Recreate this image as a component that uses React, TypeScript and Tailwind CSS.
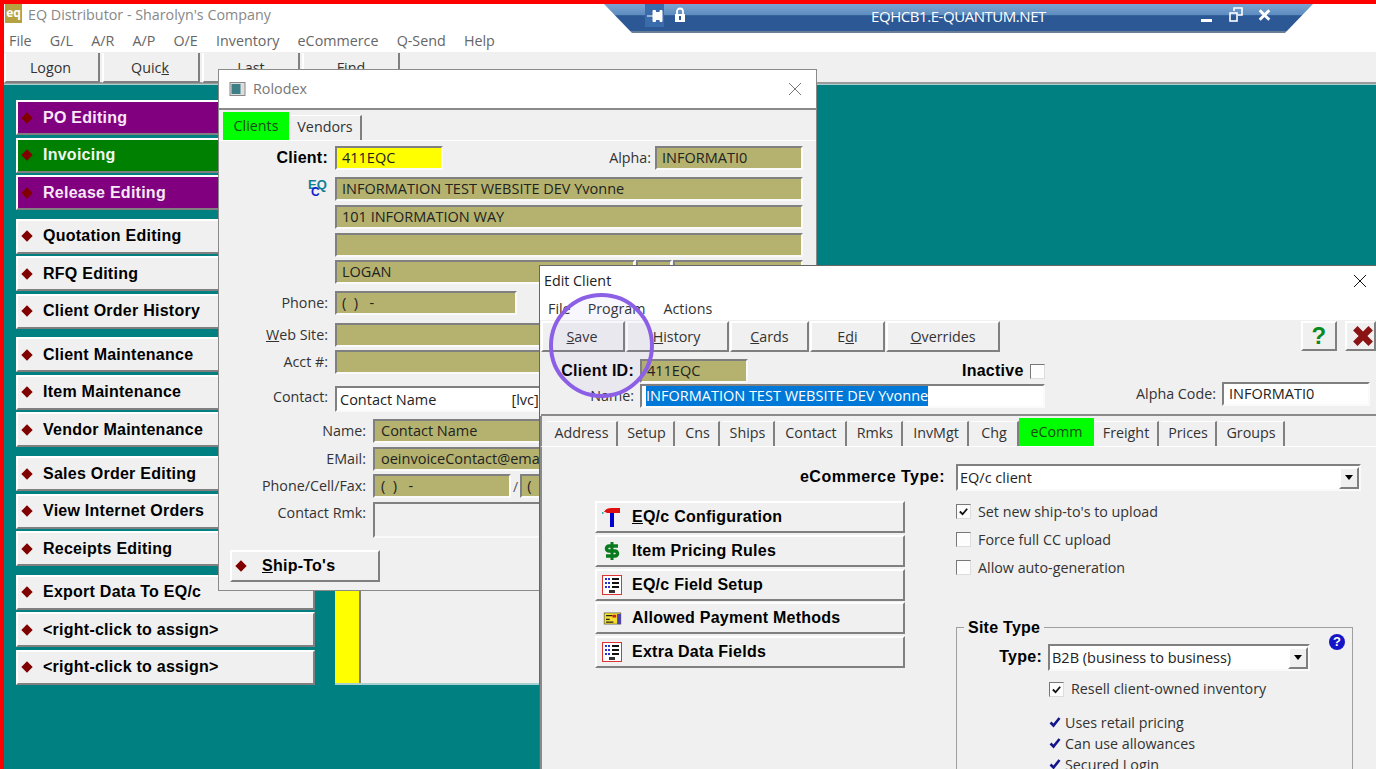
import type { ReactNode } from "react";

const sans = "font-['Open_Sans',sans-serif]";
const bold = "font-['Liberation_Sans',sans-serif] font-bold tracking-[0.25px]";
const raised = "border-2 border-t-white border-l-white border-b-[#808080] border-r-[#808080]";
const sunken = "border-2 border-t-[#808080] border-l-[#808080] border-b-[#fafafa] border-r-[#fafafa]";
const olive = "bg-[#b4b26e]";

const sideGroups = [
  [
    { label: "PO Editing", tone: "bg-[#800080] text-[#f8e8f8]" },
    { label: "Invoicing", tone: "bg-[#008000] text-[#f0f8f0]" },
    { label: "Release Editing", tone: "bg-[#800080] text-[#f8e8f8]" },
  ],
  [{ label: "Quotation Editing" }, { label: "RFQ Editing" }, { label: "Client Order History" }],
  [{ label: "Client Maintenance" }, { label: "Item Maintenance" }, { label: "Vendor Maintenance" }],
  [{ label: "Sales Order Editing" }, { label: "View Internet Orders" }, { label: "Receipts Editing" }],
  [{ label: "Export Data To EQ/c" }, { label: "<right-click to assign>" }, { label: "<right-click to assign>" }],
];

function Diamond() {
  return <span className="w-[8px] h-[8px] rotate-45 bg-[#800000] shrink-0 inline-block" />;
}

function SideButton({ label, tone }: { label: string; tone?: string }) {
  return (
    <div className={`h-[35px] w-[299px] flex items-center gap-[12px] pl-[5px] text-[16px] ${bold} ${raised} ${tone ?? "bg-[#f0f0f0] text-black"}`}>
      <Diamond />
      <span>{label}</span>
    </div>
  );
}

function Field({ className = "", tone = olive, children }: { className?: string; tone?: string; children?: ReactNode }) {
  return (
    <div className={`h-[24px] flex items-center pl-[5px] text-[14.5px] text-[#222] whitespace-pre overflow-hidden ${sans} ${sunken} ${tone} ${className}`}>
      {children}
    </div>
  );
}

function Row({ label, labelW = 116, className = "", children }: { label?: ReactNode; labelW?: number; className?: string; children: ReactNode }) {
  return (
    <div className={`flex items-center ${className}`}>
      <div className={`shrink-0 text-right text-[14.3px] text-[#333] pr-[7px] ${sans}`} style={{ width: labelW }}>
        {label}
      </div>
      {children}
    </div>
  );
}

function Check({ on }: { on?: boolean }) {
  return (
    <span className="w-[15px] h-[15px] shrink-0 flex items-center justify-center bg-[#fdfdfd] border border-t-[#777] border-l-[#777] border-b-[#ddd] border-r-[#ddd]">
      {on && (
        <svg viewBox="0 0 12 12" className="w-[11px] h-[11px]">
          <path d="M2 6l3 3 5-6" fill="none" stroke="#111" strokeWidth="2" />
        </svg>
      )}
    </span>
  );
}

function CheckRow({ label, on, className = "" }: { label: string; on?: boolean; className?: string }) {
  return (
    <div className={`flex items-center gap-[7px] text-[14.3px] text-[#333] ${sans} ${className}`}>
      <Check on={on} />
      <span>{label}</span>
    </div>
  );
}

function DropArrow() {
  return (
    <span className={`w-[20px] h-[22px] flex items-center justify-center bg-[#f0f0f0] shrink-0 ${raised}`}>
      <span className="w-0 h-0 border-x-[4px] border-x-transparent border-t-[5px] border-t-black" />
    </span>
  );
}

function Tab({ children, active, className = "" }: { children: ReactNode; active?: boolean; className?: string }) {
  return (
    <div
      className={`flex items-center justify-center text-[14.3px] ${sans} ${
        active
          ? "bg-[#00ff00] text-[#1a4a1a] h-[28px] pb-[1px]"
          : "bg-[#f0f0f0] text-[#333] h-[25px] pb-[3px] border-t border-t-white border-r-2 border-r-[#808080]"
      } ${className}`}
    >
      {children}
    </div>
  );
}

function ToolButton({ children, className = "" }: { children: ReactNode; className?: string }) {
  return (
    <div className={`h-[31px] flex items-center justify-center pt-[2px] text-[14.3px] text-[#333] bg-[#f0f0f0] ${sans} ${raised} ${className}`}>
      {children}
    </div>
  );
}

function GridIcon() {
  return (
    <svg viewBox="0 0 20 20" className="w-[20px] h-[20px]">
      <rect x="0.5" y="0.5" width="19" height="19" fill="#fff" stroke="#d33" />
      <path d="M3 4h5M3 8h5M3 12h5" stroke="#2233cc" strokeWidth="2" strokeDasharray="2 1" />
      <path d="M10 4h7M10 8h7M10 12h7" stroke="#111" strokeWidth="2" />
      <rect x="7" y="15" width="6" height="3" fill="#333" />
    </svg>
  );
}

function HammerIcon() {
  return (
    <svg viewBox="0 0 20 20" className="w-[20px] h-[20px]">
      <path d="M8 6h4v14H8z" fill="#0000d0" />
      <path d="M2 5q2-4 7-4h9v5H5q-1-1-3-1z" fill="#e01010" />
      <rect x="0" y="5" width="1.5" height="2" fill="#30b0b0" />
    </svg>
  );
}

function DollarIcon() {
  return (
    <svg viewBox="0 0 20 20" className="w-[20px] h-[20px]">
      <path d="M16 5H7a2 2 0 0 0 0 5h6a2 2 0 0 1 0 5H4" fill="none" stroke="#0a7a1e" strokeWidth="3.5" />
      <path d="M10 1v18" stroke="#0a7a1e" strokeWidth="3" />
    </svg>
  );
}

function CardIcon() {
  return (
    <svg viewBox="0 0 20 14" className="w-[19px] h-[13px]">
      <rect x="1" y="1" width="18" height="12" fill="#f5df2e" stroke="#333" strokeWidth="0.6" />
      <rect x="15" y="2" width="4" height="11" fill="#4a3fb0" />
      <path d="M3 4h7M3 8h4M3 11h8" stroke="#222" strokeWidth="1.4" />
      <rect x="10" y="3" width="4" height="3" fill="#c22" />
    </svg>
  );
}

function ActionButton({ icon, children }: { icon: ReactNode; children: ReactNode }) {
  return (
    <div className={`h-[32px] w-[310px] flex items-center bg-[#f0f0f0] text-[16px] text-black ${bold} ${raised}`}>
      <span className="w-[30px] flex justify-center shrink-0">{icon}</span>
      <span className="ml-[5px]">{children}</span>
    </div>
  );
}

function Rolodex() {
  return (
    <div className="absolute left-[218px] top-[69px] w-[599px] h-[522px] bg-[#f0f0f0] border border-[#8a8a8a] flex flex-col">
      <div className={`h-[38px] bg-white flex items-center pl-[10px] text-[14.3px] text-[#777] ${sans}`}>
        <svg viewBox="0 0 16 14" className="w-[17px] h-[14px] mr-[7px]">
          <rect x="0.5" y="0.5" width="15" height="13" fill="#ddd" stroke="#888" />
          <rect x="2" y="2" width="9" height="10" fill="#3d7f86" />
        </svg>
        Rolodex
        <svg viewBox="0 0 14 14" className="w-[14px] h-[14px] ml-auto mr-[14px]">
          <path d="M1 1l12 12M13 1L1 13" stroke="#777" strokeWidth="1" />
        </svg>
      </div>
      <div className="h-[2px] bg-[#8a8a8a]" />
      <div className="flex items-end pl-[4px] pt-[2px] h-[31px] border-b border-b-white">
        <Tab active className="w-[66px]">Clients</Tab>
        <Tab className="w-[72px] ml-[1px]">Vendors</Tab>
      </div>
      <div className="flex flex-col pr-[13px] pt-[5px]">
        <div className="flex items-center">
          <div className={`w-[116px] text-right pr-[7px] text-[16px] text-black ${bold}`}>Client:</div>
          <Field tone="bg-[#ffff00]" className="w-[108px]">411EQC</Field>
          <div className={`ml-auto pr-[4px] text-[14.3px] text-[#333] ${sans}`}>Alpha:</div>
          <Field className="w-[148px]">INFORMATI0</Field>
        </div>
        <Row
          className="mt-[7px] h-[24px]"
          label={
            <span className={`relative block ml-auto w-[20px] h-[24px] text-left text-[13px] leading-[16px] text-[#0f7f96] tracking-normal ${bold}`}>
              EQ
              <span className="absolute left-[3px] top-[7px] text-[#1020d0] text-[12px]">C</span>
            </span>
          }
        >
          <Field className="flex-1">INFORMATION TEST WEBSITE DEV Yvonne</Field>
        </Row>
        <Row className="mt-[4px]"><Field className="flex-1">101 INFORMATION WAY</Field></Row>
        <Row className="mt-[4px]"><Field className="flex-1" /></Row>
        <Row className="mt-[3px]">
          <Field className="w-[300px]">LOGAN</Field>
          <Field className="w-[36px] ml-[1px]" />
          <Field className="flex-1 ml-[1px]" />
        </Row>
        <Row className="mt-[7px]" label="Phone:"><Field className="w-[182px]">(  )   -</Field></Row>
        <Row className="mt-[8px]" label={<span><u>W</u>eb Site:</span>}><Field className="flex-1" /></Row>
        <Row className="mt-[3px]" label="Acct #:"><Field className="flex-1" /></Row>
        <Row className="mt-[12px]" label={<span className="block pb-[4px]">Contact:</span>}>
          <Field tone="bg-white" className="flex-1 !h-[26px] !pl-[3px] pt-[2px]">
            <span>Contact Name</span>
            <span className="ml-[75px]">[lvc]</span>
          </Field>
        </Row>
        <Row className="mt-[7px]" labelW={154} label="Name:"><Field className="flex-1 pl-[6px]">Contact Name</Field></Row>
        <Row className="mt-[4px]" labelW={154} label="EMail:"><Field className="flex-1 pl-[6px]">oeinvoiceContact@email.com</Field></Row>
        <Row className="mt-[3px]" labelW={154} label="Phone/Cell/Fax:">
          <Field className="w-[138px] pl-[6px]">(  )   -</Field>
          <span className={`mx-[2px] text-[14px] text-[#555] ${sans}`}>/</span>
          <Field className="flex-1">(  )   -</Field>
        </Row>
        <Row className="mt-[4px] items-start" labelW={154} label="Contact Rmk:">
          <Field tone="bg-[#f0f0f0]" className="flex-1 !h-[36px]" />
        </Row>
        <div className={`mt-[12px] ml-[11px] w-[150px] h-[32px] flex items-center gap-[17px] pl-[5px] bg-[#f0f0f0] text-[16px] text-black ${bold} ${raised}`}>
          <Diamond />
          <span><u>S</u>hip-To's</span>
        </div>
      </div>
    </div>
  );
}

function EditClient() {
  return (
    <div className="absolute left-[539px] top-[265px] w-[837px] h-[504px] bg-[#f0f0f0] border-l border-t border-[#666] flex flex-col">
      <div className={`h-[29px] bg-white flex items-center pl-[4px] text-[14.3px] text-[#222] ${sans}`}>
        Edit Client
        <svg viewBox="0 0 14 14" className="w-[14px] h-[14px] ml-auto mr-[9px]">
          <path d="M1 1l12 12M13 1L1 13" stroke="#111" strokeWidth="1" />
        </svg>
      </div>
      <div className={`h-[25px] bg-white flex items-center pl-[8px] pt-[2px] text-[14.3px] text-[#333] ${sans}`}>
        <span>File</span>
        <span className="ml-[17px]">Program</span>
        <span className="ml-[18px]">Actions</span>
      </div>
      <div className="h-[32px] flex items-center pl-[1px]">
        <ToolButton className="w-[84px] mr-[1px] pr-[2px]"><u>S</u>ave</ToolButton>
        <ToolButton className="w-[103px] mr-[1px] pr-[2px]"><u>H</u>istory</ToolButton>
        <ToolButton className="w-[79px] mr-[1px]"><u>C</u>ards</ToolButton>
        <ToolButton className="w-[75px] mr-[1px]">E<u>d</u>i</ToolButton>
        <ToolButton className="w-[114px]"><u>O</u>verrides</ToolButton>
        <ToolButton className="w-[36px] ml-auto mr-[8px] !h-[30px] !pt-0">
          <span className={`text-[24px] text-[#0a8a1e] ${bold}`}>?</span>
        </ToolButton>
        <ToolButton className="w-[31px] !h-[30px] overflow-hidden !justify-start pl-[5px] !pt-0">
          <svg viewBox="0 0 20 20" className="w-[22px] h-[22px] shrink-0">
            <path d="M1 5l4-4 5 5 5-5 4 4-5 5 5 5-4 4-5-5-5 5-4-4 5-5z" fill="#8a1414" />
          </svg>
        </ToolButton>
      </div>
      <div className="h-[62px] pt-[7px]">
        <div className="flex items-center h-[24px]">
          <div className={`w-[100px] text-right pr-[6px] text-[16px] text-black ${bold}`}>Client ID:</div>
          <Field className="w-[108px]">411EQC</Field>
          <div className={`ml-[214px] text-[16px] text-black ${bold}`}>Inactive</div>
          <span className="ml-[6px]"><Check /></span>
        </div>
        <div className="flex items-center h-[24px] mt-[1px]">
          <div className={`w-[100px] text-right pr-[6px] text-[14.3px] text-[#333] ${sans}`}>Name:</div>
          <Field tone="bg-white" className="w-[405px] !pl-[4px]">
            <span className="bg-[#0078d7] text-white">INFORMATION TEST WEBSITE DEV Yvonne</span>
          </Field>
          <div className={`w-[177px] text-right pr-[6px] pb-[4px] text-[14.3px] text-[#333] ${sans}`}>Alpha Code:</div>
          <Field tone="bg-white" className="w-[148px] mt-[-5px]">INFORMATI0</Field>
        </div>
      </div>
      <div className="h-[2px] bg-[#8a8a8a] ml-[1px]" />
      <div className="flex items-end pl-[5px] h-[31px] border-b border-b-white border-l-2 border-l-[#8a8a8a]">
        <Tab className="w-[71px] mr-[2px]">Address</Tab>
        <Tab className="w-[55px] mr-[2px]">Setup</Tab>
        <Tab className="w-[43px] mr-[2px]">Cns</Tab>
        <Tab className="w-[53px] mr-[2px]">Ships</Tab>
        <Tab className="w-[70px] mr-[2px]">Contact</Tab>
        <Tab className="w-[54px] mr-[2px]">Rmks</Tab>
        <Tab className="w-[64px] mr-[2px]">InvMgt</Tab>
        <Tab className="w-[48px]">Chg</Tab>
        <Tab active className="w-[75px] mr-[1px]">eComm</Tab>
        <Tab className="w-[64px] mr-[2px]">Freight</Tab>
        <Tab className="w-[56px] mr-[2px]">Prices</Tab>
        <Tab className="w-[66px]">Groups</Tab>
      </div>
      <div className="flex-1 flex border-l-2 border-l-[#8a8a8a] overflow-hidden">
        <div className="w-[362px] shrink-0 pl-[53px] pt-[54px] flex flex-col gap-[1.75px]">
          <ActionButton icon={<HammerIcon />}><u>E</u>Q/c Configuration</ActionButton>
          <ActionButton icon={<DollarIcon />}>Item Pricing Rules</ActionButton>
          <ActionButton icon={<GridIcon />}>EQ/c Field Setup</ActionButton>
          <ActionButton icon={<CardIcon />}>Allowed Payment Methods</ActionButton>
          <ActionButton icon={<GridIcon />}>Extra Data Fields</ActionButton>
        </div>
        <div className="flex-1 flex flex-col pt-[17px]">
          <div className="flex items-center ml-[-108px]">
            <div className={`w-[160px] text-right text-[16px] text-black pr-[11px] pb-[2px] ${bold} !tracking-[0.5px]`}>eCommerce Type:</div>
            <Field tone="bg-white" className="w-[405px] !h-[27px] !pl-[2px] !pr-0">
              <span>EQ/c client</span>
              <span className="ml-auto"><DropArrow /></span>
            </Field>
          </div>
          <CheckRow on label="Set new ship-to's to upload" className="mt-[10px] ml-[52px]" />
          <CheckRow label="Force full CC upload" className="mt-[6.5px] ml-[52px]" />
          <CheckRow label="Allow auto-generation" className="mt-[6.5px] ml-[52px]" />
          <div className="mt-[49px] ml-[52px] w-[397px] flex-1 border border-[#a0a0a0] border-b-0 relative pt-[16px]">
            <span className={`absolute left-[7px] top-[-12px] px-[4px] bg-[#f0f0f0] text-[16px] text-black ${bold}`}>Site Type</span>
            <span className="absolute left-[372px] top-[6px] w-[16px] h-[16px] rounded-full bg-[#1515c8] text-white text-[13px] leading-[16px] text-center font-bold font-['Liberation_Sans',sans-serif]">?</span>
            <div className="flex items-center">
              <div className={`w-[91px] text-right pr-[6px] pb-[1px] text-[16px] text-black ${bold}`}>Type:</div>
              <Field tone="bg-white" className="w-[262px] !h-[27px] !pl-[2px] !pr-0">
                <span>B2B (business to business)</span>
                <span className="ml-auto"><DropArrow /></span>
              </Field>
            </div>
            <CheckRow on label="Resell client-owned inventory" className="mt-[7px] ml-[92px]" />
            <div className={`mt-[12px] ml-[92px] flex flex-col text-[14.3px] leading-[21px] text-[#333] ${sans}`}>
              {["Uses retail pricing", "Can use allowances", "Secured Login"].map((t) => (
                <div key={t} className="flex items-center gap-[4px]">
                  <svg viewBox="0 0 12 12" className="w-[12px] h-[12px]">
                    <path d="M1.5 6.5l3 3 6-7.5" fill="none" stroke="#14148c" strokeWidth="2.6" />
                  </svg>
                  <span>{t}</span>
                </div>
              ))}
            </div>
          </div>
        </div>
      </div>
    </div>
  );
}

function ConnectionBar() {
  return (
    <div className={`absolute left-[604px] top-[4px] w-[709px] h-[29px] flex items-center text-white text-[15px] [clip-path:polygon(0_0,100%_0,calc(100%-28px)_100%,28px_100%)] bg-[linear-gradient(#7ba3d0_0%,#5d8cc0_38%,#2c5896_40%,#2c5896_92%,#6a7f96_95%)] ${sans}`}>
      <span className="absolute left-[41px] top-[0px] w-[19px] h-[23px] bg-[#3a6cab] flex items-center justify-center">
        <svg viewBox="0 0 16 14" className="w-[16px] h-[14px]">
          <path d="M0 7h6M6 1.5h2.5v11H6zM8.5 3.5h5v7h-5M13 1.5h2v11h-2z" fill="#fff" stroke="#fff" strokeWidth="1" />
        </svg>
      </span>
      <svg viewBox="0 0 12 16" className="absolute left-[69px] top-[3px] w-[14px] h-[16px]">
        <path d="M3 7V4.5a3 3 0 0 1 6 0V7" fill="none" stroke="#fff" strokeWidth="1.8" />
        <path d="M1 7h10v8H1z" fill="#fff" />
        <rect x="5" y="9" width="2" height="4" fill="#2c5896" />
      </svg>
      <span className="w-full text-center pb-[5px] tracking-[-0.45px]">EQHCB1.E-QUANTUM.NET</span>
      <span className="absolute left-[597px] top-[15px] w-[11px] h-[3px] bg-white" />
      <svg viewBox="0 0 14 15" className="absolute left-[625px] top-[3px] w-[14px] h-[15px]">
        <path d="M5 4V1h8v7H9" fill="none" stroke="#fff" strokeWidth="1.6" />
        <rect x="1" y="6" width="7" height="8" fill="none" stroke="#fff" strokeWidth="1.6" />
      </svg>
      <svg viewBox="0 0 10 10" className="absolute left-[654px] top-[5px] w-[13px] h-[12px]">
        <path d="M1 1l8 8M9 1l-8 8" stroke="#fff" strokeWidth="2.4" />
      </svg>
    </div>
  );
}

export default function App() {
  return (
    <div className="relative w-[1376px] h-[769px] overflow-hidden bg-[#ff0000] pl-[4px] pt-[4px] flex flex-col">
      <div className={`h-[24px] bg-white flex items-start text-[14.3px] leading-[22px] text-[#888] ${sans}`}>
        <span className="w-[17px] h-[19px] mr-[6px] ml-[1px] bg-[#b5a13f] text-white text-[12px] leading-[18px] text-center font-bold">eq</span>
        EQ Distributor - Sharolyn's Company
      </div>
      <div className={`h-[24px] bg-white flex items-center gap-[18.2px] pl-[5px] pt-[2px] text-[14.3px] text-[#666] ${sans}`}>
        <span>File</span>
        <span>G/L</span>
        <span>A/R</span>
        <span>A/P</span>
        <span>O/E</span>
        <span>Inventory</span>
        <span>eCommerce</span>
        <span>Q-Send</span>
        <span>Help</span>
      </div>
      <div className="h-[32px] bg-[#f0f0f0] flex items-start pt-[1px] border-b-2 border-b-[#9a9a9a]">
        <ToolButton className="w-[96px] !h-[30px] border-t-0 pr-[3px]">Logon</ToolButton>
        <ToolButton className="w-[98px] !h-[30px] border-t-0 ml-[2px] pr-[2px]">
          <span>Quic<u>k</u></span>
        </ToolButton>
        <ToolButton className="w-[98px] !h-[30px] border-t-0 ml-[2px]">Last</ToolButton>
        <ToolButton className="w-[98px] !h-[30px] border-t-0 ml-[2px]">Find</ToolButton>
      </div>
      <div className="flex-1 bg-[#008080] border-t border-t-[#a8d0d0] flex items-start">
        <div className="ml-[12px] mt-[15px] flex flex-col gap-[8.7px]">
          {sideGroups.map((group, i) => (
            <div key={i} className="flex flex-col gap-[2.5px]">
              {group.map((b, j) => (
                <SideButton key={j} label={b.label} tone={"tone" in b ? b.tone : undefined} />
              ))}
            </div>
          ))}
        </div>
        <div className="ml-[20px] mt-[15px] w-[400px] h-[585px] bg-[#f0f0f0] border-b-2 border-b-[#a8d0d0] flex">
          <div className="w-[26px] h-full bg-[#ffff00] border-r-2 border-r-[#808080]" />
        </div>
      </div>
      <Rolodex />
      <EditClient />
      <ConnectionBar />
      <div className="absolute left-[549px] top-[293px] w-[105px] h-[105px] rounded-full border-[4px] border-[#8b5fe6] bg-[#8b5fe6]/5" />
    </div>
  );
}
